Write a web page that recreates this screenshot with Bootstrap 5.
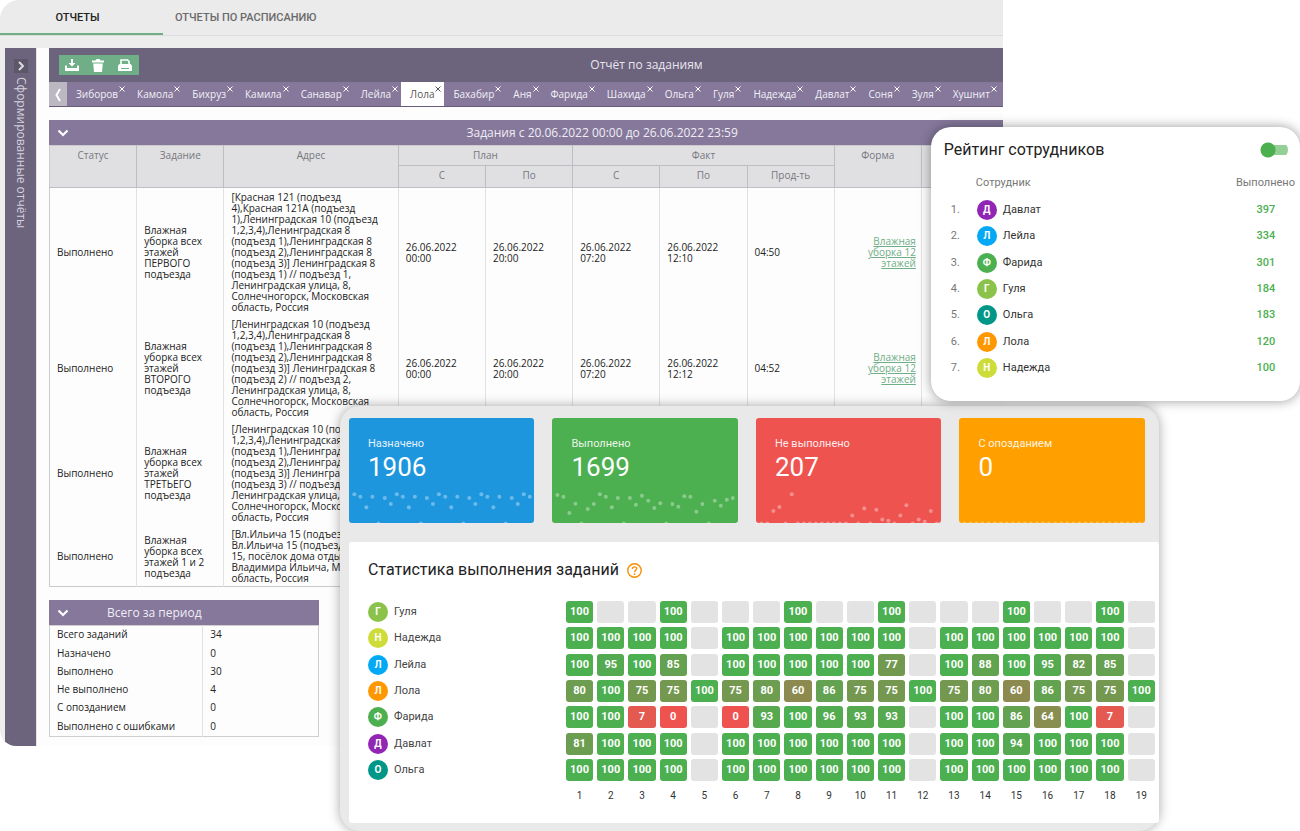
<!DOCTYPE html>
<html lang="ru">
<head>
<meta charset="utf-8">
<meta name="viewport" content="width=device-width, initial-scale=1">
<title>Отчеты</title>
<link rel="stylesheet" href="https://cdn.jsdelivr.net/npm/bootstrap@5.3.0/dist/css/bootstrap.min.css">
<style>
  :root { --violet: #85789b; --violet-dark: #6c637d; --mint: #6fae86; --ok: #4caf50; }
  body { background: #fff; color: #222; font-family: Roboto, "Noto Sans", sans-serif; font-size: 12px; }
  button { border: 0; padding: 0; background: none; }

  /* the three windows share one grid cell and are stacked over each other */
  .stage { display: grid; overflow: hidden; min-height: 100vh; align-items: start; }
  .stage > * { grid-area: 1 / 1; }
  .report-window { width: 77.15%; background: #ededed; border-radius: 20px 0 0 16px; overflow: hidden; }
  .rating-window { width: 28.4%; margin-top: 127px; padding-bottom: 4px; justify-self: end; background: #fff; border-radius: 20px; box-shadow: 0 0 12px rgba(0,0,0,.4); z-index: 1; }
  .stats-window { margin: 406px 10.85% 0 26.15%; background: #e9e9e9; border-radius: 20px; padding: 12px 0 8px 9px; box-shadow: 0 0 12px rgba(0,0,0,.35); }

  /* report window */
  .page-tabs { height: 36px; background: #ebebeb; border-bottom: 1px solid #dcdcdc; }
  .page-tabs .nav-link { padding: 0 12px; line-height: 35px; font-size: 11px; font-weight: 500; color: #6a6a6a; border-bottom: 2px solid transparent; border-radius: 0; height: 35px; }
  .page-tabs .nav-link.active { width: 163px; color: #222; border-color: var(--mint); padding: 0 8px 0 0; text-align: center; }
  .report-main { padding-top: 12px; }
  .side-rail { width: 31px; background: var(--violet-dark); margin-left: 5px; padding-top: 11px; }
  .side-rail button { width: 14px; height: 14px; background: #5c5769; display: grid; place-items: center; }
  .side-title { writing-mode: vertical-rl; color: #d5d1de; font: 12px/16px "Open Sans", "Noto Sans", sans-serif; }
  .report-body { background: #fdfdfd; font-family: "Open Sans", "Noto Sans", sans-serif; padding: 0 0 9px 12px; min-width: 0; border-left: 1px solid #e4e4e4; }
  .toolbar { height: 34px; background: var(--violet-dark); color: #e9e6ef; font-size: 12px; padding-left: 10px; }
  .toolbar .btn { width: 26px; height: 20px; padding: 0; border: 0; border-right: 1px solid #5f9c76; border-radius: 0; background: var(--mint); display: grid; place-items: center; }
  .toolbar .btn-group { width: 80px; }
  .toolbar .btn:last-child { width: 28px; border-right: 0; }
  .toolbar-title { padding-left: 16%; }
  .person-tabs { height: 25px; background: var(--violet); border-bottom: 1px solid #665b7b; }
  .person-tabs .scroll-prev { width: 18px; height: 25px; background: #bbb8c2; display: grid; place-items: center; flex: none; }
  .person-tabs .nav-link { padding: 0 10px 0 9px; color: #f3f1f7; font-size: 10px; line-height: 25px; white-space: nowrap; }
  .person-tabs .nav-item { position: relative; height: 25px; }
  .person-tabs .nav-item.current { background: #fff; }
  .person-tabs .current .nav-link { color: #555; }
  .tab-close { position: absolute; top: 4px; right: 3px; width: 6px; height: 6px; color: #fff; line-height: 0; }
  .current .tab-close { color: #555; }
  .tasks-block { margin: 13px 0; }
  .block-head { height: 25px; background: var(--violet); color: #f0edf5; font-size: 12px; padding-left: 8px; }
  .block-title { padding-left: 14%; }
  .tasks, .totals { --bs-table-bg: transparent; color: #222; font-size: 10px; line-height: 11px; }
  .tasks { table-layout: fixed; border: 1px solid #cbcbcf; border-right: 0; }
  .tasks th { background: #e0e0e2; color: #777780; font-weight: 400; line-height: 11px; text-align: center; vertical-align: top; padding: 4px; border: 1px solid #bdbdc4; border-top: 0; }
  .tasks thead tr + tr th { padding-bottom: 6px; }
  .tasks th:first-child { border-left: 0; }
  .tasks td { padding: 4px 7px 2px; vertical-align: middle; border-right: 1px solid #e2e2e4; white-space: nowrap; }
  .tasks td:last-child { border-right: 0; }
  .tasks .form-link { padding-right: 5px; text-align: right; }
  .tasks a { color: var(--mint); }
  .totals { height: 112px; border: 1px solid #cfcfcf; }
  .totals th, .totals td { padding: 0 7px 1px; vertical-align: middle; font-weight: 400; }
  .totals td { border-left: 1px solid #e2e2e2; }
  .totals-block { width: 28.3%; }
  .totals-title { margin-left: 38px; }

  /* people */
  .avatar { width: 20px; height: 20px; border-radius: 50%; color: #fff; font-size: 10px; line-height: 20px; font-weight: 700; text-align: center; flex: none; }
  .person-name { gap: 6px; }
  .window-title { font-size: 16px; line-height: 20px; font-weight: 400; margin: 0; color: #222; }
  .rating-top { padding: 13px 12px 0 13px; }
  .rating { --bs-table-bg: transparent; height: 184px; font-size: 11px; line-height: 16px; color: #333; }
  .rating th, .rating td { padding: 0; vertical-align: middle; font-weight: 400; }
  .rating .rank { width: 29px; text-align: right; color: #777; }
  .rating .person { padding-left: 17px; }
  .rating .score { width: 58px; text-align: center; color: var(--ok); font-weight: 500; }
  .rating .edge { width: 5px; }
  .rating-head { font-size: 11px; line-height: 16px; color: #777; padding: 15px 5px 6px 45px; }
  .rating-switch { width: 28px; height: 16px; margin: 0; padding: 0; appearance: none; border: 0; border-radius: 8px; background: radial-gradient(circle at 8px 8px, var(--ok) 7px, transparent 8px), linear-gradient(#94cf96, #94cf96) 8px 3px / 20px 10px no-repeat; }

  /* statistics window */
  .metrics { display: grid; grid-template-columns: repeat(4, 1fr); gap: 18px; padding-right: 14px; margin-bottom: 19px; }
  .metric { height: 105px; border-radius: 3px; color: #fff; overflow: hidden; padding: 18px 0 0 19px; display: flex; flex-direction: column; }
  .metric-name { font-size: 11px; line-height: 16px; opacity: .88; }
  .metric-value { font-size: 26px; line-height: 30px; }
  .metric svg { width: 100%; display: block; }
  .metric .dots { margin: auto 0 0 -19px; }
  .stats-panel { background: #fff; border-radius: 3px; padding: 18px 2px 14px 19px; }
  .heat { --bs-table-bg: transparent; table-layout: fixed; height: 210px; margin: 19px 0 0; font-size: 11px; line-height: 16px; }
  .heat tr { height: 26px; }
  .heat th, .heat td { padding: 0 2px; vertical-align: middle; font-weight: 400; color: #444; text-align: center; }
  .heat th:first-child { width: 196px; padding: 0; }
  .heat tfoot td { font-size: 10px; color: #333; }
  .heat-cell { height: 22px; line-height: 22px; border-radius: 3px; color: #fff; font-weight: 700; background: #e3e3e3; }
</style>
</head>
<body>
<div class="stage">

  <main class="report-window">
    <nav class="nav page-tabs flex-nowrap">
      <a class="nav-link active" href="#">ОТЧЕТЫ</a>
      <a class="nav-link" href="#">ОТЧЕТЫ ПО РАСПИСАНИЮ</a>
    </nav>
    <div class="d-flex report-main">
      <aside class="side-rail d-flex flex-column align-items-center flex-shrink-0">
        <button type="button" aria-label="Развернуть"><svg width="8" height="10" viewBox="0 0 8 10"><path d="M2 1l4 4-4 4" fill="none" stroke="#ddd" stroke-width="2"/></svg></button>
        <span class="side-title mt-1">Сформированные отчёты</span>
      </aside>
      <section class="report-body flex-grow-1">
        <header class="toolbar d-flex align-items-center">
          <div class="btn-group flex-shrink-0">
            <button class="btn" type="button" aria-label="Скачать"><svg width="14" height="12" viewBox="0 0 14 12"><path d="M6 0h2v4h2.500L7 7.500 3.500 4H6z" fill="#fff"/><path d="M0 6.500h2V9h10V6.500h2V12H0z" fill="#fff"/></svg></button>
            <button class="btn" type="button" aria-label="Удалить"><svg width="12" height="13" viewBox="0 0 12 13"><path d="M0 1.500h3.500L4.500 0h3l1 1.500H12v2H0zM1.200 4.500h9.600L10 13H2z" fill="#fff"/></svg></button>
            <button class="btn" type="button" aria-label="Печать"><svg width="14" height="13" viewBox="0 0 14 13"><path d="M3 5V1h6.500L11 2.500V5" fill="none" stroke="#fff" stroke-width="1.600"/><path d="M1.500 5h11L14 6.500V12H0V6.500z" fill="#fff"/><path d="M3 9.500h8" stroke="#6fae86" stroke-width="1"/></svg></button>
          </div>
          <span class="toolbar-title flex-grow-1 text-center">Отчёт по заданиям</span>
        </header>
        <div class="person-tabs d-flex overflow-hidden">
          <button class="scroll-prev" type="button" aria-label="Назад"><svg width="8" height="14" viewBox="0 0 8 14"><path d="M6 1L2.500 7 6 13" fill="none" stroke="#fff" stroke-width="2"/></svg></button>
          <ul class="nav flex-nowrap" id="personTabs"></ul>
        </div>

        <section class="tasks-block">
          <div class="block-head d-flex align-items-center">
            <button type="button" aria-label="Свернуть"><svg width="12" height="8" viewBox="0 0 12 8"><path d="M1.500 1.500L6 6l4.500-4.500" fill="none" stroke="#fff" stroke-width="2.200"/></svg></button>
            <span class="block-title flex-grow-1 text-center">Задания с 20.06.2022 00:00 до 26.06.2022 23:59</span>
          </div>
          <table class="table table-borderless mb-0 tasks">
            <colgroup><col style="width:9.150%"><col style="width:9.150%"><col style="width:18.300%"><col style="width:9.150%"><col style="width:9.150%"><col style="width:9.150%"><col style="width:9.150%"><col style="width:9.150%"><col style="width:9.150%"><col></colgroup>
            <thead>
              <tr><th rowspan="2">Статус</th><th rowspan="2">Задание</th><th rowspan="2">Адрес</th><th colspan="2">План</th><th colspan="3">Факт</th><th rowspan="2">Форма</th><th rowspan="2"></th></tr>
              <tr><th>С</th><th>По</th><th>С</th><th>По</th><th>Прод-ть</th></tr>
            </thead>
            <tbody>
              <tr><td>Выполнено</td><td>Влажная<br>уборка всех<br>этажей<br>ПЕРВОГО<br>подъезда</td><td>[Красная 121 (подъезд<br>4),Красная 121А (подъезд<br>1),Ленинградская 10 (подъезд<br>1,2,3,4),Ленинградская 8<br>(подъезд 1),Ленинградская 8<br>(подъезд 2),Ленинградская 8<br>(подъезд 3)] Ленинградская 8<br>(подъезд 1) // подъезд 1,<br>Ленинградская улица, 8,<br>Солнечногорск, Московская<br>область, Россия</td><td>26.06.2022<br>00:00</td><td>26.06.2022<br>20:00</td><td>26.06.2022<br>07:20</td><td>26.06.2022<br>12:10</td><td>04:50</td><td class="form-link"><a href="#">Влажная<br>уборка 12<br>этажей</a></td><td></td></tr>
              <tr><td>Выполнено</td><td>Влажная<br>уборка всех<br>этажей<br>ВТОРОГО<br>подъезда</td><td>[Ленинградская 10 (подъезд<br>1,2,3,4),Ленинградская 8<br>(подъезд 1),Ленинградская 8<br>(подъезд 2),Ленинградская 8<br>(подъезд 3)] Ленинградская 8<br>(подъезд 2) // подъезд 2,<br>Ленинградская улица, 8,<br>Солнечногорск, Московская<br>область, Россия</td><td>26.06.2022<br>00:00</td><td>26.06.2022<br>20:00</td><td>26.06.2022<br>07:20</td><td>26.06.2022<br>12:12</td><td>04:52</td><td class="form-link"><a href="#">Влажная<br>уборка 12<br>этажей</a></td><td></td></tr>
              <tr><td>Выполнено</td><td>Влажная<br>уборка всех<br>этажей<br>ТРЕТЬЕГО<br>подъезда</td><td>[Ленинградская 10 (по<br>1,2,3,4),Ленинградская<br>(подъезд 1),Ленинград<br>(подъезд 2),Ленинград<br>(подъезд 3)] Ленингра<br>(подъезд 3) // подъезд<br>Ленинградская улица,<br>Солнечногорск, Моско<br>область, Россия</td><td></td><td></td><td></td><td></td><td></td><td></td><td></td></tr>
              <tr><td>Выполнено</td><td>Влажная<br>уборка всех<br>этажей 1 и 2<br>подъезда</td><td>[Вл.Ильича 15 (подъез<br>Вл.Ильича 15 (подъезд<br>15, посёлок дома отды<br>Владимира Ильича, М<br>область, Россия</td><td></td><td></td><td></td><td></td><td></td><td></td><td></td></tr>
            </tbody>
          </table>
        </section>

        <section class="totals-block">
          <div class="block-head d-flex align-items-center">
            <button type="button" aria-label="Свернуть"><svg width="12" height="8" viewBox="0 0 12 8"><path d="M1.500 1.500L6 6l4.500-4.500" fill="none" stroke="#fff" stroke-width="2.200"/></svg></button>
            <span class="totals-title">Всего за период</span>
          </div>
          <table class="table table-borderless mb-0 totals">
            <colgroup><col style="width:57%"><col></colgroup>
            <tbody>
              <tr><th scope="row">Всего заданий</th><td>34</td></tr>
              <tr><th scope="row">Назначено</th><td>0</td></tr>
              <tr><th scope="row">Выполнено</th><td>30</td></tr>
              <tr><th scope="row">Не выполнено</th><td>4</td></tr>
              <tr><th scope="row">С опозданием</th><td>0</td></tr>
              <tr><th scope="row">Выполнено с ошибками</th><td>0</td></tr>
            </tbody>
          </table>
        </section>
      </section>
    </div>
  </main>

  <section class="stats-window">
    <div class="metrics" id="metrics"></div>
    <div class="stats-panel">
      <div class="d-flex align-items-center gap-2">
        <h2 class="window-title">Статистика выполнения заданий</h2>
        <svg width="15" height="15" viewBox="0 0 14 14"><circle cx="7" cy="7" r="6.300" fill="none" stroke="#fb8c00" stroke-width="1.300"/><path d="M5 5.600C5 4.300 5.900 3.600 7 3.600s2 .7 2 1.800c0 1.400-2 1.500-2 3.200" fill="none" stroke="#fb8c00" stroke-width="1.300"/><circle cx="7" cy="10.400" r=".8" fill="#fb8c00"/></svg>
      </div>
      <table class="table table-borderless heat" id="heat"><tbody></tbody><tfoot></tfoot></table>
    </div>
  </section>

  <section class="rating-window">
    <div class="rating-top d-flex justify-content-between align-items-center">
      <h2 class="window-title"><label for="ratingSwitch">Рейтинг сотрудников</label></h2>
      <input class="rating-switch" type="checkbox" role="switch" id="ratingSwitch">
    </div>
    <div class="rating-head d-flex justify-content-between"><span>Сотрудник</span><span>Выполнено</span></div>
    <table class="table table-borderless rating mb-0" id="rating"><tbody></tbody></table>
    <div class="pb-3"></div>
  </section>
</div>

<script src="https://cdn.jsdelivr.net/npm/bootstrap@5.3.0/dist/js/bootstrap.bundle.min.js"></script>
<script>
  const colours = { 'Давлат': '#9126b4', 'Лейла': '#03a9f4', 'Фарида': '#4caf50', 'Гуля': '#8bc34a', 'Ольга': '#009688', 'Лола': '#ff9800', 'Надежда': '#cddc39' };
  const avatar = n => `<span class="avatar" style="background:${colours[n]}">${n[0]}</span>`;
  const person = n => `<span class="d-flex align-items-center person-name">${avatar(n)}<span>${n}</span></span>`;

  const tabs = 'Зиборов Камола Бихруз Камила Санавар Лейла Лола Бахабир Аня Фарида Шахида Ольга Гуля Надежда Давлат Соня Зуля Хушнит'.split(' ');
  document.getElementById('personTabs').innerHTML = tabs.map(n =>
    `<li class="nav-item${n === 'Лола' ? ' current' : ''}"><a class="nav-link" href="#">${n}</a><button class="tab-close" type="button" aria-label="Закрыть"><svg width="6" height="6" viewBox="0 0 6 6"><path d="M.5.5l5 5M5.500.5l-5 5" stroke="currentColor" stroke-width="1"/></svg></button></li>`).join('');

  const rating = [['Давлат', 397], ['Лейла', 334], ['Фарида', 301], ['Гуля', 184], ['Ольга', 183], ['Лола', 120], ['Надежда', 100]];
  document.querySelector('#rating tbody').innerHTML = rating.map(([n, v], i) =>
    `<tr><td class="rank">${i + 1}.</td><td class="person">${person(n)}</td><td class="score">${v}</td><td class="edge"></td></tr>`).join('');

  // metric cards: heights of the 30 daily dots, 97 is the card's lower edge
  const B = 97;
  const metrics = [
    ['Назначено', 1906, '#1e96dd', Array.from({ length: 30 }, (_, i) => [10, 17, 49, 17, B, 21, 39][i % 7])],
    ['Выполнено', 1699, '#4caf50', [12,17,66,38,B,54,39,10,17,49,21,B,21,41,14,29,51,37,B,39,47,16,17,62,39,B,29,44,26,21]],
    ['Не выполнено', 207, '#ef5350', [B,B,60,48,B,10,B,B,B,B,B,B,B,B,B,73,B,52,B,56,85,89,B,73,43,B,85,92,60,B]],
    ['С опозданием', 0, '#ffa000', Array(30).fill(B)]
  ];
  document.getElementById('metrics').innerHTML = metrics.map(([n, v, c, ys]) =>
    `<div class="metric" style="background:${c}"><span class="metric-name">${n}</span><span class="metric-value">${v}</span><div class="dots"><svg viewBox="0 0 555 96">${ys.map((y, i) => `<circle cx="${Math.round(16 + 18.1 * i)}" cy="${y}" r="6" fill="#fff" fill-opacity=".35"/>`).join('')}</svg></div></div>`).join('');

  // heat map: share of finished tasks per day, null is a day without tasks
  const _ = null, H = 100;
  const heat = {
    'Гуля':    [H,_,_,H,_,_,_,H,_,_,H,_,_,_,H,_,_,H,_],
    'Надежда': [H,H,H,H,_,H,H,H,H,H,H,_,H,H,H,H,H,H,_],
    'Лейла':   [H,95,H,85,_,H,H,H,H,H,77,_,H,88,H,95,82,85,_],
    'Лола':    [80,H,75,75,H,75,80,60,86,75,75,H,75,80,60,86,75,75,H],
    'Фарида':  [H,H,7,0,_,0,93,H,96,93,93,_,H,H,86,64,H,7,_],
    'Давлат':  [81,H,H,H,_,H,H,H,H,H,H,_,H,H,94,H,H,H,_],
    'Ольга':   [H,H,H,H,_,H,H,H,H,H,H,_,H,H,H,H,H,H,_]
  };
  const tint = v => `rgb(${[[239, 76], [83, 175], [80, 80]].map(([a, b]) => Math.round(a + (b - a) * v / 100))})`;
  document.querySelector('#heat tbody').innerHTML = Object.entries(heat).map(([n, row]) =>
    `<tr><th scope="row">${person(n)}</th>${row.map(v => v === null ? '<td><div class="heat-cell"></div></td>' : `<td><div class="heat-cell" style="background:${tint(v)}">${v}</div></td>`).join('')}</tr>`).join('');
  document.querySelector('#heat tfoot').innerHTML = `<tr><th></th>${Array.from({ length: 19 }, (x, i) => `<td>${i + 1}</td>`).join('')}</tr>`;
</script>
</body>
</html>
